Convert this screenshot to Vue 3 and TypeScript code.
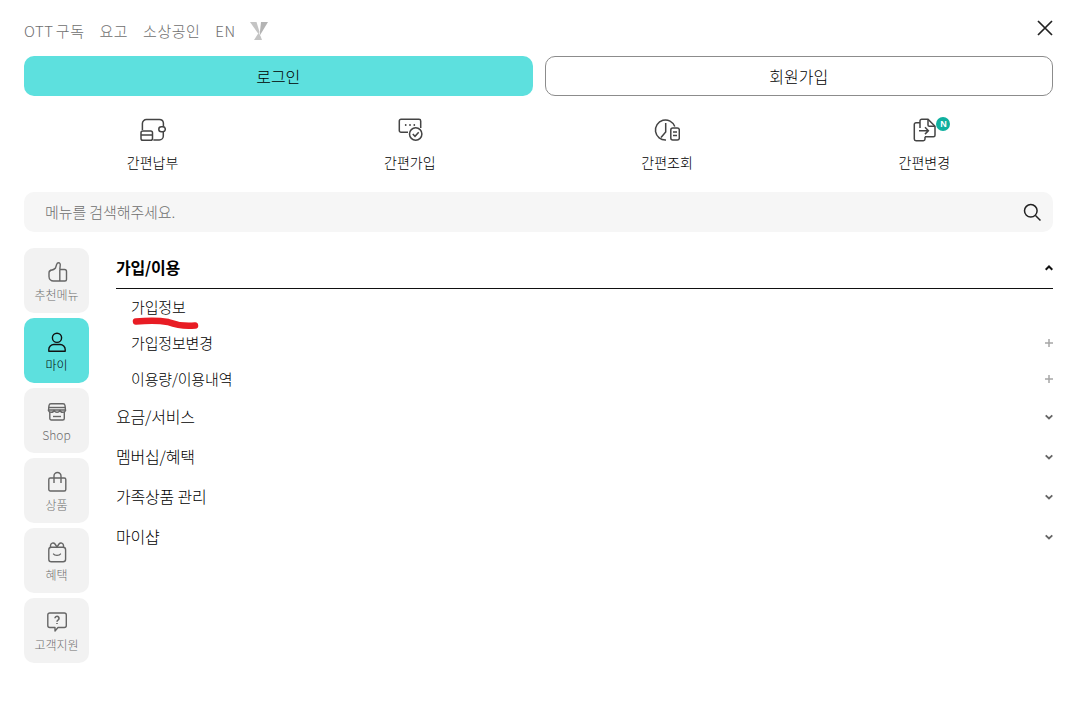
<script setup lang="ts">
const topLinks = ['OTT 구독', '요고', '소상공인', 'EN']
const shortcuts = [
  { label: '간편납부', icon: 'pay' },
  { label: '간편가입', icon: 'join' },
  { label: '간편조회', icon: 'view' },
  { label: '간편변경', icon: 'change' },
]
const tabs = [
  { label: '추천메뉴', icon: 'thumb' },
  { label: '마이', icon: 'user', active: true },
  { label: 'Shop', icon: 'shop' },
  { label: '상품', icon: 'bag' },
  { label: '혜택', icon: 'gift' },
  { label: '고객지원', icon: 'help' },
]
const subItems = ['가입정보', '가입정보변경', '이용량/이용내역']
const groups = ['요금/서비스', '멤버십/혜택', '가족상품 관리', '마이샵']
</script>

<template>
  <div class="page">
    <header class="top">
      <nav class="links">
        <a v-for="l in topLinks" :key="l">{{ l }}</a>
        <svg class="y-logo" width="18" height="19" viewBox="0 0 18 19">
          <path d="M0 1h6.500L9.500 11 8.500 13z" fill="#c4c4c4" />
          <path d="M11 1h7L9.500 15z" fill="#b4b4b4" />
          <path d="M8.500 12l2 3 1.500 4H4z" fill="#c4c4c4" />
        </svg>
      </nav>
      <svg class="close" width="18" height="18" viewBox="0 0 18 18">
        <path d="M2 2l14 14M16 2L2 16" stroke="#222" stroke-width="1.700" fill="none" />
      </svg>
    </header>

    <div class="auth">
      <button class="btn primary">로그인</button>
      <button class="btn outline">회원가입</button>
    </div>

    <div class="shortcuts">
      <div v-for="s in shortcuts" :key="s.label" class="shortcut">
        <span class="sc-icon">
          <svg width="26" height="26" viewBox="0 0 26 26" fill="none" stroke="#444" stroke-width="1.500">
            <template v-if="s.icon === 'pay'">
              <path d="M2.400 13V6.500a4 4 0 0 1 4-4h13a4 4 0 0 1 4 3.500v3.700" />
              <rect x="1" y="14" width="11.500" height="9.300" rx="1.800" />
              <path d="M1 18h11.500" />
              <path d="M13.300 23h6a4 4 0 0 0 4-4v-4.200" />
              <rect x="18.800" y="9.800" width="6.500" height="5" rx="2.500" />
            </template>
            <template v-else-if="s.icon === 'join'">
              <path d="M11 15.300H4A1.700 1.700 0 0 1 2.300 13.600V4A1.700 1.700 0 0 1 4 2.300h18A1.700 1.700 0 0 1 23.700 4v7" />
              <circle cx="18.700" cy="17" r="6.200" />
              <path d="M15.800 17l2.200 2.300 3.700-4" />
              <path d="M8.700 8h.01M13 8h.01M17.300 8h.01" stroke-linecap="round" stroke-width="1.800" />
            </template>
            <template v-else-if="s.icon === 'view'">
              <path d="M12 23a10 10 0 1 1 8.800-13.500" />
              <path d="M11.700 6v9L7 20.500" />
              <rect x="16.800" y="11" width="8.500" height="12" rx="2" />
              <path d="M19 15h4M19 18.500h4" />
            </template>
            <template v-else-if="s.icon === 'change'">
              <path d="M9 5.700H5a1.700 1.700 0 0 0-1.700 1.700V22A1.700 1.700 0 0 0 5 23.700h7.300A1.700 1.700 0 0 0 14 22v-2.300" />
              <path d="M9 11V4a1.700 1.700 0 0 1 1.700-1.700H17l7 7v9a1.500 1.500 0 0 1-1.500 1.500H14" />
              <path d="M17 2.300V8a1.300 1.300 0 0 0 1.300 1.300H24" />
              <path d="M8 13.700h9.300M14 10.300l3.400 3.400-3.400 3.400" />
            </template>
          </svg>
          <span v-if="s.icon === 'change'" class="n-badge">N</span>
        </span>
        <span class="sc-label">{{ s.label }}</span>
      </div>
    </div>

    <div class="search">
      <span class="placeholder">메뉴를 검색해주세요.</span>
      <svg width="20" height="20" viewBox="0 0 20 20" fill="none" stroke="#222" stroke-width="1.500">
        <circle cx="8.800" cy="8.800" r="6.300" />
        <path d="M13.500 13.500l5 5" />
      </svg>
    </div>

    <div class="body">
      <aside class="tabs">
        <div v-for="t in tabs" :key="t.label" class="tab" :class="{ active: t.active }">
          <svg width="22" height="22" viewBox="0 0 22 22" fill="none" :stroke="t.active ? '#111' : '#666'" stroke-width="1.400">
            <template v-if="t.icon === 'thumb'">
              <path d="M4 9.500c2.500-.5 4.500-1 5.500-2.500l1.300-4c.3-1 1-1.300 1.700-1.300 1.300 0 2 1.200 1.700 2.800L13.800 8.500" />
              <path d="M3 12c0-1.500.5-2.500 2-2.500" />
              <path d="M13.800 8.500h4.700a2 2 0 0 1 2 2v8a1.500 1.500 0 0 1-1.500 1.500H7.500C5 20 3 18 3 15.500V12" />
              <path d="M13.800 8.500V20" />
            </template>
            <template v-else-if="t.icon === 'user'">
              <circle cx="11" cy="6.800" r="4.600" />
              <path d="M2.800 20.300v-1.800a5 5 0 0 1 5-5h6.400a5 5 0 0 1 5 5v1.800z" stroke-linejoin="round" />
            </template>
            <template v-else-if="t.icon === 'shop'">
              <path d="M5 2.800h12a2 2 0 0 1 2 1.700L19.500 9H2.500L3 4.500a2 2 0 0 1 2-1.700z" />
              <path d="M2.500 6.500h17" />
              <path d="M2.500 9c.3 3 5.200 3 5.800 0 .500 3 5 3 5.500 0 .6 3 5.400 3 5.700 0" />
              <path d="M3.800 11v6.500a1.500 1.500 0 0 0 1.500 1.500h11.500a1.500 1.500 0 0 0 1.500-1.500V11" />
              <path d="M7 15.500h8" />
            </template>
            <template v-else-if="t.icon === 'bag'">
              <rect x="2.800" y="7" width="17" height="13" rx="1.500" />
              <path d="M8 12V5a3.500 3.500 0 0 1 7 0v7" />
            </template>
            <template v-else-if="t.icon === 'gift'">
              <rect x="2.800" y="6.300" width="16.800" height="14.400" rx="2.500" />
              <path d="M4.500 6.300V4.500a2.500 2.500 0 0 1 4.500-1.500L11 6l2-3a2.500 2.500 0 0 1 4.500 1.500v1.800" />
              <path d="M7.500 13c1 1.800 6 1.800 7 0" stroke-linecap="round" />
            </template>
            <template v-else>
              <path d="M3.800 2h14.500a2 2 0 0 1 2 2v10.500a2 2 0 0 1-2 2H12l-3 3.500v-3.500H3.800a2 2 0 0 1-2-2V4a2 2 0 0 1 2-2z" stroke-linejoin="round" />
              <path d="M9 7.300a2 2 0 1 1 3.200 1.600c-.9.600-1.200 1-1.200 1.800" stroke-width="1.600" />
              <path d="M11 12v1.100" stroke-width="1.600" />
            </template>
          </svg>
          <span class="tab-label">{{ t.label }}</span>
        </div>
      </aside>

      <main class="menu">
        <div class="group-head open">
          <span>가입/이용</span>
          <svg width="8" height="6" viewBox="0 0 8 6" fill="none" stroke="#111" stroke-width="2"><path d="M.7 4.700L4 1.500l3.300 3.200" /></svg>
        </div>
        <ul class="subs">
          <li v-for="(it, i) in subItems" :key="it" class="sub">
            <span>{{ it }}</span>
            <svg v-if="i > 0" width="8" height="8" viewBox="0 0 8 8" stroke="#a6a6a6" stroke-width="1.500"><path d="M4 0v8M0 4h8" /></svg>
            <svg v-else class="scribble" width="72" height="16" viewBox="0 0 72 16" fill="none">
              <path d="M6 5.500C16 4.500 30 4.500 38 6c8 3 18 4.500 27 3.500" stroke="#e81c24" stroke-width="6.500" stroke-linecap="round" />
            </svg>
          </li>
        </ul>
        <div v-for="g in groups" :key="g" class="group-head">
          <span>{{ g }}</span>
          <svg width="8" height="6" viewBox="0 0 8 6" fill="none" stroke="#666" stroke-width="1.800"><path d="M.7 1.300L4 4.500l3.300-3.200" /></svg>
        </div>
      </main>
    </div>
  </div>
</template>

<style scoped>
.page {
  width: 1077px;
  height: 714px;
  box-sizing: border-box;
  padding: 0 24px;
  background: #fff;
  font-family: "Noto Sans CJK KR", "Noto Sans", sans-serif;
  font-weight: 300;
  color: #000;
  overflow: hidden;
}
.top {
  height: 56px;
  display: flex;
  align-items: center;
  justify-content: space-between;
  padding-top: 6px;
  box-sizing: border-box;
}
.links {
  display: flex;
  align-items: center;
  gap: 15px;
  font-size: 15px;
  color: #6e6e6e;
  letter-spacing: 0.5px;
  word-spacing: -1.5px;
}
.links a { margin-bottom: 2px; }
.y-logo { margin: -2px 0 0 0; }
.close { margin: -7px -1px 0 0; }
.auth {
  display: grid;
  grid-template-columns: 1fr 1fr;
  gap: 12px;
}
.btn {
  height: 40px;
  border-radius: 10px;
  font: inherit;
  font-size: 16px;
  color: #000;
  padding: 0;
}
.primary { background: #5de0de; border: 0; }
.outline { background: #fff; border: 1px solid #8c8c8c; }
.shortcuts {
  display: grid;
  grid-template-columns: repeat(4, 1fr);
  padding-top: 21px;
  height: 96px;
  box-sizing: border-box;
}
.shortcut {
  display: flex;
  flex-direction: column;
  align-items: center;
}
.sc-icon {
  position: relative;
  display: block;
  width: 26px;
  height: 26px;
}
.n-badge {
  position: absolute;
  left: 25px;
  top: 0;
  width: 14px;
  height: 14px;
  border-radius: 50%;
  background: #0fb09f;
  color: #fff;
  font: 700 9px/14px "Liberation Sans", sans-serif;
  text-align: center;
}
.sc-label {
  margin-top: 9px;
  font-size: 14px;
  line-height: 20px;
  letter-spacing: 0.1px;
}
.search {
  height: 40px;
  border-radius: 10px;
  background: #f6f6f6;
  display: flex;
  align-items: center;
  justify-content: space-between;
  padding: 0 11px 0 21px;
}
.placeholder {
  font-size: 15px;
  color: #6e6e6e;
  letter-spacing: -0.1px;
  margin-bottom: 2px;
}
.body {
  display: flex;
  gap: 27px;
  margin-top: 16px;
}
.tabs {
  width: 65px;
  flex: none;
  display: flex;
  flex-direction: column;
  gap: 5px;
}
.tab {
  height: 65px;
  box-sizing: border-box;
  padding-top: 13px;
  border-radius: 10px;
  background: #f2f2f2;
  color: #6e6e6e;
  display: flex;
  flex-direction: column;
  align-items: center;
}
.tab.active { background: #5de0de; color: #000; }
.tab-label {
  font-size: 12px;
  line-height: 18px;
  margin-top: 3px;
}
.menu { flex: 1; min-width: 0; }
.group-head {
  height: 40px;
  display: flex;
  align-items: center;
  justify-content: space-between;
  font-size: 16px;
  letter-spacing: -0.2px;
}
.group-head span { margin-bottom: 2px; }
.group-head.open {
  font-weight: 700;
  border-bottom: 1px solid #111;
  box-sizing: content-box;
}
.subs {
  list-style: none;
  margin: 0;
  padding: 0 0 0 15px;
  display: flex;
  flex-direction: column;
}
.sub {
  position: relative;
  height: 36px;
  display: flex;
  align-items: center;
  justify-content: space-between;
  font-size: 15px;
  letter-spacing: -0.15px;
}
.sub span { margin-bottom: 2px; }
.scribble {
  position: absolute;
  left: -1px;
  top: 27px;
}
</style>
